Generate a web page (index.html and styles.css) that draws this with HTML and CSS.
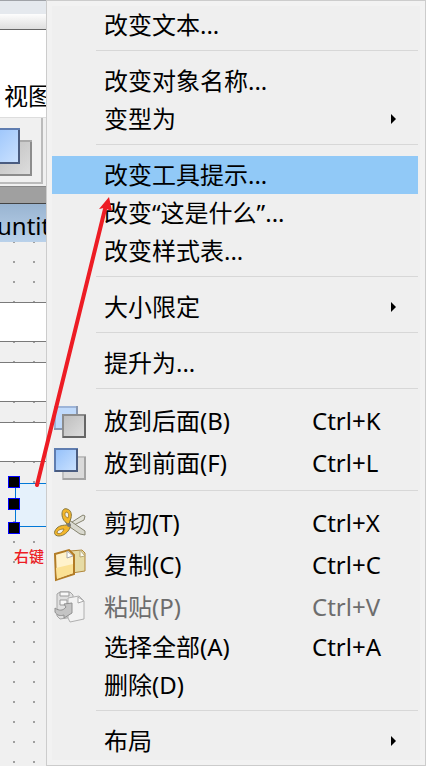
FILE: index.html
```
<!DOCTYPE html>
<html lang="zh-CN">
<head>
    <meta charset="UTF-8">
    <meta name="viewport" content="width=device-width, initial-scale=1.0">
    <title>Qt Designer</title>
    <link rel="stylesheet" href="styles.css">
</head>
<body>

    <div class="designer">
        <div class="window-top"></div>
        <div class="window-edge"></div>
        <div class="menu-bar">
            <button class="menu-title">视图</button>
        </div>
        <div class="toolbar">
            <button class="tool-btn" aria-label="放到前面">
                <svg width="40" height="64" viewBox="0 0 40 64">
                    <defs>
                        <linearGradient id="blue" x1="0" y1="0" x2="1" y2="1">
                            <stop offset="0" stop-color="#94c0fa"/>
                            <stop offset="1" stop-color="#cbe2ff"/>
                        </linearGradient>
                        <linearGradient id="gray" x1="0" y1="0" x2="1" y2="1">
                            <stop offset="0" stop-color="#bdbdbd"/>
                            <stop offset="1" stop-color="#dedede"/>
                        </linearGradient>
                    </defs>
                    <rect x="-2" y="23" width="33" height="34" fill="url(#gray)" stroke="#aaa" stroke-width="2"/>
                    <path d="M31 24v33H0" fill="none" stroke="#8c8c8c" stroke-width="2"/>
                    <rect x="-14" y="11" width="33" height="34" fill="url(#blue)" stroke="#5f7db0" stroke-width="2"/>
                    <path d="M19 12v33H0" fill="none" stroke="#4a5c80" stroke-width="2"/>
                </svg>
            </button>
        </div>
        <div class="mdi-area"></div>
        <div class="form-title">untitled</div>
        <div class="form-canvas">
            <input class="line-edit" type="text" aria-label="lineEdit">
            <input class="line-edit" type="text" aria-label="lineEdit_2">
            <input class="line-edit" type="text" aria-label="lineEdit_3">
            <div class="selected">
                <button class="push-button" aria-label="pushButton"></button>
                <span class="handle handle-top"></span>
                <span class="handle handle-middle"></span>
                <span class="handle handle-bottom"></span>
            </div>
            <p class="note">右键</p>
        </div>
    </div>

    <div class="context-menu">
        <button class="item"><span class="label">改变文本...</span></button>
        <hr>
        <button class="item"><span class="label">改变对象名称...</span></button>
        <button class="item"><span class="label">变型为</span><span class="arrow"></span></button>
        <hr>
        <button class="item active"><span class="label">改变工具提示...</span></button>
        <button class="item"><span class="label">改变“这是什么”...</span></button>
        <button class="item"><span class="label">改变样式表...</span></button>
        <hr>
        <button class="item"><span class="label">大小限定</span><span class="arrow"></span></button>
        <hr>
        <button class="item"><span class="label">提升为...</span></button>
        <hr>
        <button class="item tall">
            <svg class="icon" width="36" height="36" viewBox="0 0 36 36">
                <rect x="3" y="4" width="22" height="22" fill="#c0dafb" stroke="#9db4d8" stroke-width="2"/>
                <path d="M2 26h10M25 3v9" fill="none" stroke="#8a98b0" stroke-width="2"/>
                <rect x="11" y="12" width="22" height="22" fill="url(#gray)" stroke="#8c8c8c" stroke-width="2"/>
                <path d="M33 12v22H11" fill="none" stroke="#666" stroke-width="2"/>
            </svg>
            <span class="label">放到后面(B)</span><span class="shortcut">Ctrl+K</span>
        </button>
        <button class="item tall">
            <svg class="icon" width="36" height="36" viewBox="0 0 36 36">
                <rect x="11" y="12" width="22" height="22" fill="#dadada" stroke="#c0c0c0" stroke-width="2"/>
                <path d="M33 12v22H11" fill="none" stroke="#a4a4a4" stroke-width="2"/>
                <rect x="3" y="4" width="22" height="22" fill="url(#blue)" stroke="#5f7db0" stroke-width="2"/>
                <path d="M25 4v22H3" fill="none" stroke="#4a5c80" stroke-width="2"/>
            </svg>
            <span class="label">放到前面(F)</span><span class="shortcut">Ctrl+L</span>
        </button>
        <hr>
        <button class="item tall">
            <svg class="icon" width="36" height="36" viewBox="0 0 36 36">
                <path d="M17 19L31 10l2 1-1 4-14 7z" fill="#e2e2d8" stroke="#85836f"/>
                <path d="M14 17l3-2 16 11v4l-5-1-13-9z" fill="#d9d9cf" stroke="#85836f"/>
                <path d="M17 19c-4-1-7-5-7-10 0-4 2-6 5-5 4 1 5 5 4 9z" fill="#f3b62b" stroke="#85763f"/>
                <path d="M14 7c3 0 3 4 2 6-3-1-4-4-2-6z" fill="#efefef" stroke="#a5822e"/>
                <path d="M18 20c-5 0-10 0-13 3-4 4-3 8 2 8s9-4 11-8z" fill="#f3b62b" stroke="#85763f"/>
                <path d="M5 28c0-3 4-4 7-4-1 3-4 6-7 4z" fill="#efefef" stroke="#a5822e"/>
                <circle cx="17" cy="20" r="2" fill="#777"/>
            </svg>
            <span class="label">剪切(T)</span><span class="shortcut">Ctrl+X</span>
        </button>
        <button class="item tall">
            <svg class="icon" width="36" height="36" viewBox="0 0 36 36">
                <path d="M18 4l12-1 3 3v18l-13 2z" fill="#e6dba5" stroke="#b1873b"/>
                <path d="M28 3v7l5-1z" fill="#f8f8ef" stroke="#b8a873"/>
                <path d="M3 7l14-4 5 5v19L4 33z" fill="#fff2cb" stroke="#b27b25" stroke-width="2"/>
                <path d="M4 21l17-4v9L5 32z" fill="#fbe194"/>
                <path d="M15 4v7l6-2z" fill="#fff" stroke="#aaa"/>
            </svg>
            <span class="label">复制(C)</span><span class="shortcut">Ctrl+C</span>
        </button>
        <button class="item tall" disabled>
            <svg class="icon" width="36" height="36" viewBox="0 0 36 36">
                <path d="M5 5l3-2h10l3 3v22l-13 2-3-3z" fill="#e0e0e0" stroke="#a5a5a5"/>
                <path d="M8 3h9v4H8zM8 11h7v5H8z" fill="#f8f8f8" stroke="#999"/>
                <path d="M16 9l11-2 5 5v18l-14 3-2-4z" fill="#f2f2f2" stroke="#b0b0b0"/>
                <path d="M26 8v6l6-2z" fill="#fff" stroke="#aaa"/>
                <path d="M3 19v4c2 4 6 4 9 3v3l8-5V14l-8 1 2 3c-3 4-7 4-11 1z" fill="#c4c4c4" stroke="#909090"/>
            </svg>
            <span class="label">粘贴(P)</span><span class="shortcut">Ctrl+V</span>
        </button>
        <button class="item"><span class="label">选择全部(A)</span><span class="shortcut">Ctrl+A</span></button>
        <button class="item"><span class="label">删除(D)</span></button>
        <hr>
        <button class="item"><span class="label">布局</span><span class="arrow"></span></button>
    </div>

    <svg class="pointer" width="426" height="766" viewBox="0 0 426 766">
        <path d="M37 485L105 209" fill="none" stroke="#ed1c24" stroke-width="4" stroke-linecap="round"/>
        <path d="M109 197L99 209l5-1 5 2 3 1z" fill="#ed1c24"/>
    </svg>

</body>
</html>
```
FILE: styles.css
```
* {
    margin: 0;
    padding: 0;
    box-sizing: border-box;
}

body {
    position: relative;
    min-height: 100vh;
    overflow: hidden;
    background-color: #f0f0f0;
    font-family: "Noto Sans", "Noto Sans CJK SC", sans-serif;
    font-size: 24px;
    color: #000;
}

button {
    border: none;
    background: none;
    font: inherit;
    color: inherit;
    text-align: left;
}

/* Designer window behind the menu */
.designer {
    display: flex;
    flex-direction: column;
    min-height: 100vh;
}

.window-top {
    height: 14px;
    background-color: #e5e9ee;
    border-top: 1px solid #a0a3a8;
}

.window-edge {
    height: 16px;
    background: linear-gradient(#fdfdfd, #dedede);
    border-bottom: 1px solid #666;
}

.menu-bar {
    height: 87px;
    padding: 48px 4px 0;
    background-color: #fff;
}

.menu-title {
    line-height: 36px;
}

.toolbar {
    height: 70px;
    padding-bottom: 2px;
    background-color: #f0f0f0;
    border-top: 1px solid #ddd;
    border-bottom: 1px solid #888;
}

.tool-btn {
    display: block;
    width: 43px;
    height: 66px;
    border-right: 2px solid #bbb;
    border-bottom: 2px solid #bbb;
}

.mdi-area {
    height: 17px;
    background-color: #a0a0a0;
    border-bottom: 1px solid #444;
}

.form-title {
    height: 38px;
    line-height: 44px;
    text-indent: -3px;
    background: linear-gradient(#99b4d1, #b9d1ea);
}

.form-canvas {
    display: flex;
    flex-direction: column;
    flex: 1;
    gap: 20px;
    padding-top: 60px;
    background-color: #f0f0f0;
    background-image: conic-gradient(from 270deg at 2px 2px, #a0a0a0 90deg, transparent 0);
    background-size: 20px 20px;
    background-position: 13px -1px;
}

.line-edit {
    width: 100%;
    height: 40px;
    border: 1px solid #7a7a7a;
    border-width: 1px 0;
    background-color: #fff;
}

.selected {
    position: relative;
    height: 44px;
    margin: 1px 0 0 15px;
}

.push-button {
    display: block;
    width: 100%;
    height: 100%;
    border: 1px solid #0078d7;
    background-color: #e5f1fb;
}

.handle {
    position: absolute;
    left: -7px;
    width: 12px;
    height: 12px;
    border: 1px solid #00f;
    background-color: #000;
}

.handle-top {
    top: -7px;
}

.handle-middle {
    top: 15px;
}

.handle-bottom {
    bottom: -7px;
}

.note {
    padding-left: 14px;
    font-size: 15px;
    font-weight: 500;
    line-height: 18px;
    color: #ed1c24;
}

/* Context menu */
.context-menu {
    position: absolute;
    top: 0;
    left: 46px;
    right: 0;
    padding: 5px 7px 5px 5px;
    background-color: #efefef;
    border: 1px solid #ccc;
    box-shadow: inset 0 0 0 5px #f2f2f2;
}

.item {
    display: grid;
    grid-template-columns: 52px 208px 1fr;
    align-items: center;
    width: 100%;
    height: 38px;
    line-height: 38px;
    white-space: nowrap;
}

.item.tall {
    height: 42px;
}

.item.active {
    background-color: #91c9f7;
}

.item:disabled {
    color: #6d6d6d;
}

.icon {
    grid-column: 1;
    grid-row: 1;
}

.label {
    grid-column: 2;
    grid-row: 1;
}

.shortcut {
    grid-column: 3;
    grid-row: 1;
}

.arrow {
    grid-column: 3;
    grid-row: 1;
    justify-self: end;
    margin-right: 22px;
    border: 5px solid transparent;
    border-left-color: #000;
    border-right: none;
}

hr {
    height: 1px;
    margin: 6px 0 11px 44px;
    border: none;
    background-color: #d7d7d7;
}

/* Red arrow drawn over everything */
.pointer {
    position: absolute;
    top: 0;
    left: 0;
    pointer-events: none;
}
```
